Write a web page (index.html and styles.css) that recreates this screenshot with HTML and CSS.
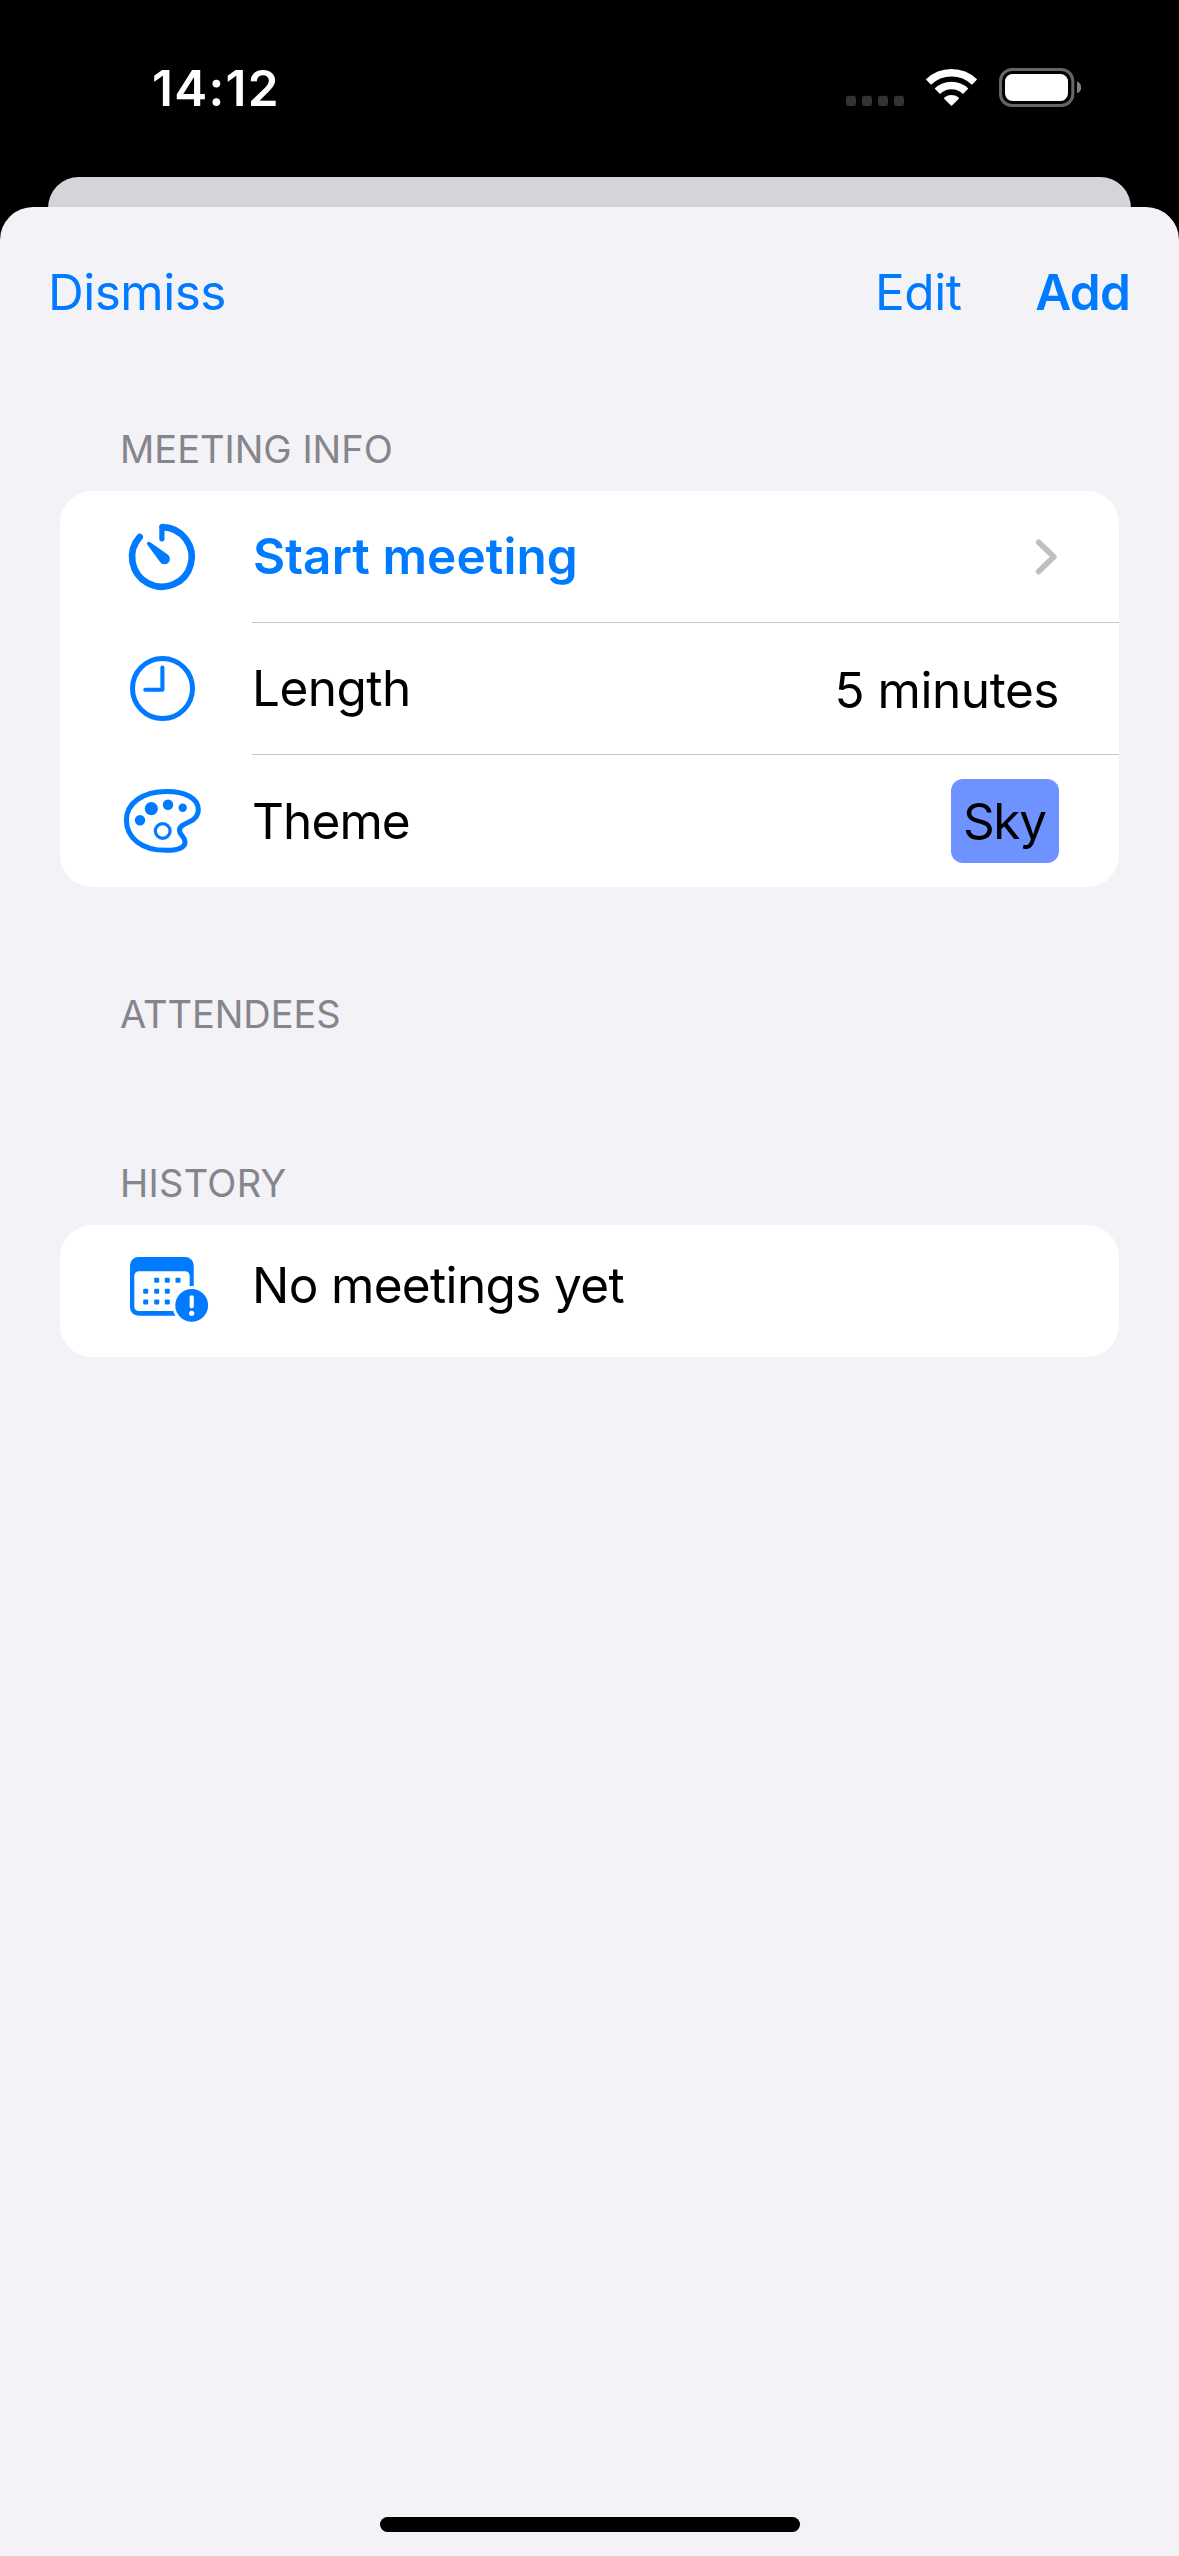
FILE: index.html
```html
<!DOCTYPE html>
<html lang="en">
<head>
<meta charset="utf-8">
<title>Meeting details</title>
<link rel="stylesheet" href="styles.css">
</head>
<body>
<div class="screen">
  <header class="status-bar">
    <span class="time">14:12</span>
    <div class="status-icons">
      <svg width="58" height="60" viewBox="0 0 58 60" fill="#333">
        <rect x="0" y="37.7" width="10" height="10.3" rx="3"/>
        <rect x="16" y="37.7" width="10" height="10.3" rx="3"/>
        <rect x="32" y="37.7" width="10" height="10.3" rx="3"/>
        <rect x="48" y="37.7" width="10" height="10.3" rx="3"/>
      </svg>
      <svg width="51" height="60" viewBox="0 0 51 60">
        <g fill="none" stroke="#fff" stroke-width="7.6">
          <path d="M2.4 24.1A33.2 33.2 0 0 1 48.6 24.1"/>
          <path d="M11.3 33.3A20.4 20.4 0 0 1 39.7 33.3"/>
        </g>
        <path d="M25.5 48L18.4 40.9Q17.6 40 18.6 39.2A11.5 11.5 0 0 1 32.4 39.2Q33.4 40 32.6 40.9Z" fill="#fff"/>
      </svg>
      <svg width="82" height="60" viewBox="0 0 82 60">
        <rect x="1.5" y="11.5" width="72.3" height="36" rx="11.5" fill="none" stroke="#666" stroke-width="3"/>
        <rect x="6" y="16" width="63" height="27" rx="7.5" fill="#fff"/>
        <path d="M78 23.3Q82.3 25.3 82.3 29.3T78 35.3Z" fill="#808080"/>
      </svg>
    </div>
  </header>
  <div class="sheet-behind"></div>
  <main class="sheet">
    <nav class="nav">
      <a class="nav-link">Dismiss</a>
      <div class="nav-actions">
        <a class="nav-link">Edit</a>
        <a class="nav-link nav-primary">Add</a>
      </div>
    </nav>

    <h2 class="section-title">MEETING INFO</h2>
    <section class="card">
      <div class="row">
        <svg class="icon" viewBox="0 0 96 96">
          <path d="M48.6 18.1A29.8 29.8 0 1 1 25.7 28" fill="none" stroke="#007aff" stroke-width="6.6" stroke-linecap="round"/>
          <path d="M47.9 18V29.8" stroke="#007aff" stroke-width="5.2" stroke-linecap="round"/>
          <path d="M35.9 33.1L53 45.1A5.4 5.4 0 1 1 45.7 52.4L33.2 35.6A1.9 1.9 0 0 1 35.9 33.1Z" fill="#007aff"/>
        </svg>
        <div class="row-body">
          <span class="label start">Start meeting</span>
          <svg width="24" height="40" viewBox="0 0 24 40" fill="none" stroke="#bfbfbf" stroke-width="5.7" stroke-linecap="round" stroke-linejoin="round"><path d="M3.7 5.2L18.8 19.8L3.7 34.5"/></svg>
        </div>
      </div>
      <div class="row">
        <svg class="icon" viewBox="0 0 96 96" fill="none" stroke="#007aff">
          <circle cx="48.5" cy="47.5" r="30" stroke-width="5"/>
          <path d="M48.4 26.6V48.7H31.3" stroke-width="4.1" stroke-linecap="round" stroke-linejoin="round"/>
        </svg>
        <div class="row-body">
          <span class="label length">Length</span>
          <span class="value">5 minutes</span>
        </div>
      </div>
      <div class="row">
        <svg class="icon" viewBox="0 0 96 96" fill="#007aff">
          <path d="M12.4 47C12.4 30 29 18.5 52.5 18.5C71 18.5 84.3 25 84.3 37C84.3 44 80 46.8 75 49C69.5 51.5 65.5 53 65.5 57.5C65.5 62 71 63.5 71 69C71 75 63 77.3 52 77.3C28 77.3 12.4 65 12.4 47Z" fill="none" stroke="#007aff" stroke-width="5.1"/>
          <circle cx="26" cy="47.3" r="5.2"/>
          <circle cx="37.3" cy="35.7" r="6.6"/>
          <circle cx="54" cy="31.7" r="5.2"/>
          <circle cx="68.7" cy="34.7" r="4.2"/>
          <circle cx="48.7" cy="58" r="7.4" fill="none" stroke="#007aff" stroke-width="3.2"/>
        </svg>
        <div class="row-body">
          <span class="label theme">Theme</span>
          <span class="swatch">Sky</span>
        </div>
      </div>
    </section>

    <h2 class="section-title attendees">ATTENDEES</h2>

    <h2 class="section-title history">HISTORY</h2>
    <section class="card">
      <div class="row row-empty">
        <svg class="icon" viewBox="0 0 96 96" fill="#007aff">
          <rect x="16" y="20" width="63.7" height="58.7" rx="8.5"/>
          <rect x="20.3" y="34.2" width="55.4" height="39.8" rx="4.5" fill="#fff"/>
          <rect x="40.2" y="40.8" width="5" height="5" rx="1"/>
          <rect x="50.8" y="40.8" width="5" height="5" rx="1"/>
          <rect x="61.5" y="40.8" width="5" height="5" rx="1"/>
          <rect x="29.2" y="51.8" width="5" height="5" rx="1"/>
          <rect x="40.2" y="51.8" width="5" height="5" rx="1"/>
          <rect x="50.8" y="51.8" width="5" height="5" rx="1"/>
          <rect x="29.2" y="62.5" width="5" height="5" rx="1"/>
          <rect x="40.2" y="62.5" width="5" height="5" rx="1"/>
          <rect x="50.8" y="62.5" width="5" height="5" rx="1"/>
          <circle cx="77.7" cy="68.3" r="19.4" fill="#fff"/>
          <circle cx="77.7" cy="68.3" r="16.4"/>
          <path d="M77.7 60.3V69.3" stroke="#fff" stroke-width="4.2" stroke-linecap="round"/>
          <circle cx="77.7" cy="76.3" r="2.6" fill="#fff"/>
        </svg>
        <div class="row-body">
          <span class="label none">No meetings yet</span>
        </div>
      </div>
    </section>
    <div class="home-indicator"></div>
  </main>
</div>
</body>
</html>
```
FILE: styles.css
```css
* {
  box-sizing: border-box;
}

body {
  margin: 0;
  background: #000;
  color: #000;
  font-family: Inter, "Liberation Sans", sans-serif;
  font-size: 49.5px;
  line-height: 60px;
  white-space: nowrap;
}

svg {
  display: block;
  flex: none;
}

.screen {
  display: flex;
  flex-direction: column;
  width: 1179px;
  height: 2556px;
}

/* Status bar */
.status-bar {
  display: flex;
  align-items: center;
  justify-content: space-between;
  height: 176px;
  margin-bottom: 1px;
  padding: 0 98px 0 152px;
}

.time {
  color: #fff;
  font-weight: 600;
  letter-spacing: 1.3px;
}

.status-icons {
  display: flex;
  gap: 22px;
}

/* Sheets */
.sheet-behind {
  height: 80px;
  margin: 0 48px -50px;
  border-radius: 31px 31px 0 0;
  background: #d4d4d9;
}

.sheet {
  position: relative;
  display: flex;
  flex: 1;
  flex-direction: column;
  border-radius: 33px 33px 0 0;
  background: #f2f2f7;
}

.nav {
  display: flex;
  align-items: center;
  justify-content: space-between;
  height: 170px;
  margin-bottom: 47px;
  padding: 0 49px 0 48px;
}

.nav-actions {
  display: flex;
  gap: 74px;
}

.nav-link {
  color: #007aff;
  letter-spacing: -0.5px;
}

.nav-primary {
  font-weight: 600;
  letter-spacing: -0.8px;
}

/* Grouped list */
.section-title {
  margin: 0 0 17px;
  padding-left: 120px;
  color: #85858b;
  font-size: 38px;
  font-weight: 400;
  line-height: 50px;
  letter-spacing: 0;
}

.attendees {
  margin: 102px 0 119px;
  letter-spacing: -0.05px;
}

.history {
  letter-spacing: 0.28px;
}

.card {
  margin: 0 60px;
  border-radius: 32px;
  background: #fff;
}

.row {
  display: flex;
  align-items: center;
  height: 132px;
  padding-left: 54px;
}

.row-empty {
  padding-bottom: 12px;
}

.icon {
  width: 96px;
  height: 96px;
  margin-right: 42px;
}

.row-body {
  display: flex;
  flex: 1;
  align-items: center;
  justify-content: space-between;
  height: 132px;
  padding-right: 60px;
}

.row:not(:last-child) .row-body {
  box-shadow: inset 0 -1px #c6c6c8;
}

.start {
  padding: 0 0 2px 1px;
  color: #007aff;
  font-weight: 600;
  letter-spacing: 0.1px;
}

.length {
  padding-bottom: 2px;
  letter-spacing: -0.55px;
}

.value {
  padding-top: 1px;
  letter-spacing: -0.45px;
}

.theme {
  letter-spacing: -0.9px;
}

.none {
  letter-spacing: -0.65px;
}

.swatch {
  width: 108px;
  height: 84px;
  padding-left: 12px;
  border-radius: 12px;
  background: #6e92ff;
  line-height: 84px;
  letter-spacing: -1.4px;
}

.home-indicator {
  width: 420px;
  height: 15px;
  margin: auto auto 24px;
  border-radius: 8px;
  background: #000;
}
```
